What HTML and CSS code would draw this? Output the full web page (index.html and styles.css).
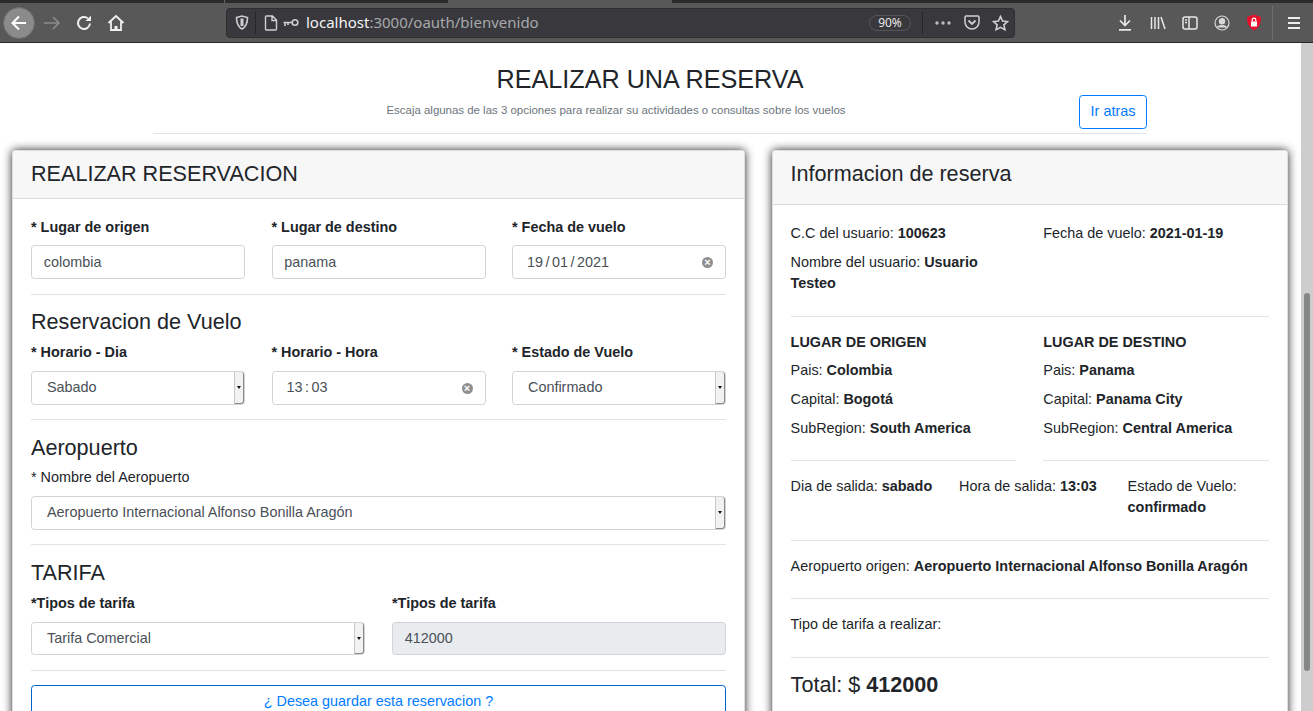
FILE: index.html
```html
<!DOCTYPE html>
<html>
<head>
    <title>Realizar una reserva</title>
    <link rel="stylesheet" href="styles.css">
</head>
<body>

<!-- Browser toolbar -->
<div class="tabstrip">
    <div class="tab-piece dark"></div>
    <div class="tab-piece mid"></div>
    <div class="tab-piece light"></div>
    <div class="tab-piece dark wide"></div>
</div>
<div class="toolbar">
    <div class="back-btn">
        <svg width="20" height="20" viewBox="0 0 20 20" fill="none" stroke="#fff" stroke-width="2"><path d="M17 10H4M10 3.5 3.500 10l6.500 6.500"/></svg>
    </div>
    <svg class="forward" width="18" height="18" viewBox="0 0 18 18" fill="none" stroke="#8c8c8c" stroke-width="1.600"><path d="M1 9h15M10 3l6 6-6 6"/></svg>
    <svg class="reload" width="18" height="18" viewBox="0 0 18 18" fill="none" stroke="#f0f0f0" stroke-width="2"><path d="M15 9.500A6 6 0 1 1 12.800 4.300"/><path d="M16 1.500V7h-5.500z" fill="#f0f0f0" stroke="none"/></svg>
    <svg class="home" width="18" height="18" viewBox="0 0 18 18" fill="none" stroke="#f0f0f0" stroke-width="1.800"><path d="M1.500 9 9 2l7.500 7M4 7.500V16h10V7.500"/><path d="M7.500 16v-4h3v4" fill="#f0f0f0" stroke="none"/></svg>

    <div class="urlbar">
        <svg class="shield" width="14" height="15" viewBox="0 0 14 15" fill="none" stroke="#cfcfcf" stroke-width="1.600"><path d="M1.500 2.500 7 1l5.500 1.500c0 5-1 9-5.500 11.500C2.500 11.500 1.500 7.500 1.500 2.500z"/><path d="M7 3.500v7.500" stroke-width="3"/></svg>
        <span class="url-sep"></span>
        <svg class="doc" width="14" height="16" viewBox="0 0 14 16" fill="none" stroke="#d0d0d0" stroke-width="1.400"><path d="M2 1h6.500L12.500 5v9a1 1 0 0 1-1 1h-9a1 1 0 0 1-1-1V2a1 1 0 0 1 .5-1zM8 1v4.500h4.500"/></svg>
        <svg class="key" width="16" height="9" viewBox="0 0 16 9" fill="none" stroke="#d0d0d0" stroke-width="1.600"><circle cx="12" cy="4.500" r="2.800"/><path d="M9 4.500H.5M2 4.500V8M5 4.500V7"/></svg>
        <span class="url-text">localhost<span class="url-dim">:3000/oauth/bienvenido</span></span>
        <span class="zoom-pill">90%</span>
        <span class="url-sep second"></span>
        <svg class="dots" width="16" height="4" viewBox="0 0 16 4" fill="#bdbdbd"><circle cx="2" cy="2" r="1.700"/><circle cx="8" cy="2" r="1.700"/><circle cx="14" cy="2" r="1.700"/></svg>
        <svg class="pocket" width="16" height="15" viewBox="0 0 16 15" fill="none" stroke="#d0d0d0" stroke-width="1.500"><path d="M1 2a1 1 0 0 1 1-1h12a1 1 0 0 1 1 1v5a7 7 0 0 1-14 0z"/><path d="M4.500 5.500 8 9l3.500-3.500" stroke-width="1.800"/></svg>
        <svg class="star" width="17" height="16" viewBox="0 0 17 16" fill="none" stroke="#d0d0d0" stroke-width="1.600"><path d="m8.500 1.500 2.100 4.500 4.900.6-3.600 3.300 1 4.800-4.400-2.400-4.400 2.400 1-4.800L1.500 6.600l4.900-.6z"/></svg>
    </div>

    <div class="toolbar-icons">
        <svg class="download" width="14" height="16" viewBox="0 0 14 16" fill="none" stroke="#e8e8e8" stroke-width="1.700"><path d="M7 0v10M2 5.500l5 5 5-5M1 14.800h12"/></svg>
        <svg width="16" height="14" viewBox="0 0 16 14" fill="none" stroke="#e8e8e8" stroke-width="1.500"><path d="M1.500 1v12M5 1v12M8.500 1v12M11 1l4 12"/></svg>
        <svg width="16" height="14" viewBox="0 0 16 14" fill="none" stroke="#e8e8e8" stroke-width="1.500"><rect x="1" y="1" width="14" height="12" rx="2"/><path d="M7 1v12M3 4h2M3 6.500h2"/></svg>
        <svg width="16" height="16" viewBox="0 0 16 16" fill="none" stroke="#d8d8d8" stroke-width="1.200"><circle cx="8" cy="8" r="7"/><circle cx="8" cy="6.300" r="2.600" fill="#d8d8d8"/><path d="M3.500 12.500c1-2.500 8-2.500 9 0" fill="#d8d8d8"/></svg>
        <svg width="16" height="17" viewBox="0 0 16 17"><path d="M8 .5 15 3c0 6-1.500 10.500-7 13.500C2.500 13.500 1 9 1 3z" fill="#e8112d"/><rect x="5" y="7.500" width="6" height="5" fill="#fff"/><path d="M6.200 7.500V6a1.800 1.800 0 0 1 3.600 0v1.500" fill="none" stroke="#fff" stroke-width="1.200"/></svg>
    </div>
    <span class="toolbar-sep"></span>
    <svg class="hamburger" width="14" height="12" viewBox="0 0 14 12" fill="none" stroke="#eee" stroke-width="1.800"><path d="M1 1h12M1 6h12M1 11h12"/></svg>
</div>

<!-- Page viewport -->
<div class="viewport">
    <div class="page">
        <div class="page-header">
            <div class="page-title">
                <h1>REALIZAR UNA RESERVA</h1>
                <p>Escaja algunas de las 3 opciones para realizar su actividades o consultas sobre los vuelos</p>
            </div>
            <a class="btn-back">Ir atras</a>
        </div>

        <div class="cards">
            <div class="card card-form">
                <div class="card-header"><h2>REALIZAR RESERVACION</h2></div>
                <div class="card-body">
                    <div class="row three first-row">
                        <div class="field">
                            <label>* Lugar de origen</label>
                            <div class="control">colombia</div>
                        </div>
                        <div class="field">
                            <label>* Lugar de destino</label>
                            <div class="control">panama</div>
                        </div>
                        <div class="field">
                            <label>* Fecha de vuelo</label>
                            <div class="control date">19 / 01 / 2021<span class="clear">&#215;</span></div>
                        </div>
                    </div>
                    <hr class="after-first">
                    <h3>Reservacion de Vuelo</h3>
                    <div class="row three">
                        <div class="field">
                            <label>* Horario - Dia</label>
                            <div class="control select">Sabado<span class="select-btn"></span></div>
                        </div>
                        <div class="field">
                            <label>* Horario - Hora</label>
                            <div class="control date">13 : 03<span class="clear">&#215;</span></div>
                        </div>
                        <div class="field">
                            <label>* Estado de Vuelo</label>
                            <div class="control select">Confirmado<span class="select-btn"></span></div>
                        </div>
                    </div>
                    <hr>
                    <h3 class="airport-title">Aeropuerto</h3>
                    <div class="field">
                        <label class="plain">* Nombre del Aeropuerto</label>
                        <div class="control select">Aeropuerto Internacional Alfonso Bonilla Aragón<span class="select-btn"></span></div>
                    </div>
                    <hr>
                    <h3>TARIFA</h3>
                    <div class="row two">
                        <div class="field">
                            <label>*Tipos de tarifa</label>
                            <div class="control select">Tarifa Comercial<span class="select-btn"></span></div>
                        </div>
                        <div class="field">
                            <label>*Tipos de tarifa</label>
                            <div class="control disabled">412000</div>
                        </div>
                    </div>
                    <hr>
                    <a class="btn-save">¿ Desea guardar esta reservacion ?</a>
                </div>
            </div>

            <div class="card card-info">
                <div class="card-header"><h2>Informacion de reserva</h2></div>
                <div class="card-body">
                    <div class="row info-two">
                        <div>
                            <p>C.C del usuario: <b>100623</b></p>
                            <p>Nombre del usuario: <b>Usuario Testeo</b></p>
                        </div>
                        <div>
                            <p>Fecha de vuelo: <b>2021-01-19</b></p>
                        </div>
                    </div>
                    <hr class="after-user">
                    <div class="row info-two">
                        <div class="place">
                            <p><b>LUGAR DE ORIGEN</b></p>
                            <p>Pais: <b>Colombia</b></p>
                            <p>Capital: <b>Bogotá</b></p>
                            <p>SubRegion: <b>South America</b></p>
                            <hr>
                        </div>
                        <div class="place">
                            <p><b>LUGAR DE DESTINO</b></p>
                            <p>Pais: <b>Panama</b></p>
                            <p>Capital: <b>Panama City</b></p>
                            <p>SubRegion: <b>Central America</b></p>
                            <hr>
                        </div>
                    </div>
                    <div class="row info-three">
                        <p>Dia de salida: <b>sabado</b></p>
                        <p>Hora de salida: <b>13:03</b></p>
                        <p>Estado de Vuelo: <b>confirmado</b></p>
                    </div>
                    <hr class="after-flight">
                    <p>Aeropuerto origen: <b>Aeropuerto Internacional Alfonso Bonilla Aragón</b></p>
                    <hr class="after-airport">
                    <p>Tipo de tarifa a realizar:</p>
                    <hr class="after-fare">
                    <p class="total">Total: $ <b>412000</b></p>
                </div>
            </div>
        </div>
    </div>
    <div class="scrollbar"><div class="scroll-thumb"></div></div>
</div>

</body>
</html>
```

FILE: styles.css
```css
* {
    box-sizing: border-box;
}
html, body {
    height: 100%;
}
body {
    margin: 0;
    overflow: hidden;
    font-family: "Liberation Sans", Arial, sans-serif;
    font-size: 14.4px;
    line-height: 21.6px;
    color: #212529;
    background-color: #fff;
}

/* Browser toolbar */
.tabstrip {
    display: flex;
    height: 3px;
    background-color: #2b2b2b;
}
.tab-piece {
    width: 224px;
}
.tab-piece.dark {
    background-color: #2b2b2b;
}
.tab-piece.mid {
    background-color: #2b2b2b;
    border-left: 1px solid #666;
}
.tab-piece.light {
    background-color: #585858;
}
.tab-piece.wide {
    flex: 1;
}
.toolbar {
    display: flex;
    align-items: center;
    height: 40px;
    background-color: #585858;
    border-bottom: 1px solid #2a2a2a;
}
.back-btn {
    display: flex;
    align-items: center;
    justify-content: center;
    width: 32px;
    height: 32px;
    margin-left: 3px;
    border-radius: 50%;
    background-color: #8b8b8b;
    border: 1px solid #6c6c6c;
}
.forward {
    margin-left: 8px;
}
.reload {
    margin-left: 14px;
}
.home {
    margin-left: 14px;
}
.urlbar {
    display: flex;
    align-items: center;
    width: 789px;
    height: 30px;
    margin-left: 101px;
    background-color: #38383d;
    border-radius: 4px;
    border: 1px solid #2e2e2e;
    color: #fff;
}
.shield {
    margin-left: 8px;
}
.url-sep {
    width: 1px;
    height: 22px;
    margin-left: 6px;
    background-color: #26262a;
}
.doc {
    margin-left: 8px;
}
.key {
    margin-left: 5px;
}
.url-text {
    margin-left: 7px;
    font-family: "Noto Sans", sans-serif;
    font-size: 15px;
    color: #f4f4f4;
    width: 563px;
    white-space: nowrap;
}
.url-dim {
    color: #a9a9ab;
}
.zoom-pill {
    width: 42px;
    height: 16px;
    border: 1px solid #55555b;
    border-radius: 8px;
    font-family: "Noto Sans", sans-serif;
    font-size: 12px;
    line-height: 14px;
    text-align: center;
    color: #e8e8e8;
}
.url-sep.second {
    margin-left: 11px;
}
.dots {
    margin-left: 12px;
}
.pocket {
    margin-left: 13px;
}
.star {
    margin-left: 12px;
}
.toolbar-icons {
    display: flex;
    align-items: center;
    gap: 16px;
    margin-left: 103px;
}
.download {
    margin-right: 2px;
}
.toolbar-sep {
    width: 1px;
    height: 34px;
    margin-left: 10px;
    background-color: #6e6e6e;
}
.hamburger {
    margin-left: 14px;
}

/* Page */
.viewport {
    display: flex;
    height: 668px;
}
.page {
    flex: 1;
    min-width: 0;
    overflow: hidden;
}
.scrollbar {
    width: 12px;
    padding: 250px 3px 0;
    background-color: #cdcdcd;
}
.scroll-thumb {
    height: 378px;
    border-radius: 3px;
    background-color: #858787;
}
.page-header {
    display: flex;
    width: 994px;
    height: 91px;
    margin-left: 153px;
    padding-top: 18px;
    border-bottom: 1px solid #e3e3e3;
}
.page-title {
    flex: 1;
    text-align: center;
}
.page-title h1 {
    margin: 0 0 5px;
    padding-left: 68px;
    font-size: 25.2px;
    font-weight: 400;
    line-height: 36px;
    color: #212529;
}
.page-title p {
    margin: 0;
    font-size: 11.45px;
    line-height: 16px;
    color: #6c757d;
}
.btn-back {
    align-self: flex-end;
    width: 68px;
    height: 34px;
    margin-bottom: 4px;
    padding-top: 5px;
    border: 1px solid #007bff;
    border-radius: 3.6px;
    color: #007bff;
    text-align: center;
    white-space: nowrap;
}
.cards {
    display: flex;
    align-items: flex-start;
    gap: 26.6px;
    margin: 15.6px 13px 0 12px;
}
.card {
    border-radius: 3.6px;
    background-color: #fff;
    border: 1px solid rgba(0, 0, 0, 0.125);
    box-shadow: 0 0 10px rgba(0, 0, 0, 0.85);
}
.card-form {
    width: 733px;
    flex: none;
}
.card-info {
    flex: 1;
    min-width: 0;
}
.card-header {
    background-color: #f7f7f7;
    border-bottom: 1px solid #dcdcdc;
    padding: 10.4px 18px 10.8px;
}
.card-header h2 {
    margin: 0;
    font-size: 21.6px;
    font-weight: 400;
    line-height: 25.92px;
}
.card-info .card-header h2 {
    margin-bottom: 6.6px;
}
.card-body {
    padding: 17.8px 18px 30px;
}
.row {
    display: grid;
}
.row.three {
    grid-template-columns: repeat(3, 1fr);
    column-gap: 26.500px;
}
.row.two {
    grid-template-columns: repeat(2, 1fr);
    column-gap: 27px;
}
label {
    display: block;
    margin-bottom: 7.2px;
    font-weight: bold;
}
label.plain {
    font-weight: 400;
    margin-bottom: 7.6px;
}
.control {
    position: relative;
    height: 33.6px;
    padding: 5px 11.8px;
    border: 1px solid #ced4da;
    border-radius: 3.6px;
    color: #495057;
    background-color: #fff;
}
.first-row .control {
    padding-top: 5.3px;
}
.control.date {
    padding-left: 14px;
    word-spacing: -1.5px;
}
.control.select {
    padding-left: 15px;
}
.control.disabled {
    background-color: #e9ecef;
}
.clear {
    position: absolute;
    right: 12px;
    top: 11px;
    width: 11px;
    height: 11px;
    border-radius: 50%;
    background-color: #8f8f8f;
    color: #fff;
    font-size: 11px;
    line-height: 11px;
    text-align: center;
    font-weight: bold;
}
.select-btn {
    position: absolute;
    right: 0;
    top: 0;
    bottom: 0;
    width: 10px;
    background-color: #f2f2f2;
    border-left: 1px solid #c8c8c8;
    border-right: 1px solid #8a8a8a;
    border-bottom: 1px solid #8a8a8a;
    border-radius: 0 3px 3px 0;
}
.select-btn::after {
    content: "";
    position: absolute;
    left: 2px;
    top: 14px;
    border-left: 2.500px solid transparent;
    border-right: 2.500px solid transparent;
    border-top: 3px solid #111;
}
hr {
    margin: 14.4px 0 0;
    border: 0;
    border-top: 1px solid #e3e3e3;
}
hr.after-first {
    margin-top: 15px;
}
h3 {
    margin: 14.4px 0 7.2px;
    font-size: 21.6px;
    font-weight: 400;
    line-height: 25.92px;
}
h3.airport-title {
    margin-bottom: 6.8px;
}
.btn-save {
    display: block;
    margin-top: 14.4px;
    height: 34px;
    padding-top: 5px;
    border: 1px solid #0062cc;
    border-radius: 3.6px;
    color: #007bff;
    text-align: center;
}

/* Right card */
.card-info p {
    margin: 0 0 7.2px;
}
.row.info-two {
    grid-template-columns: 1fr 1fr;
    column-gap: 27px;
}
.row.info-three {
    grid-template-columns: 142px 142px 1fr;
    column-gap: 26.5px;
    margin-top: 14.5px;
}
hr.after-user {
    margin: 14px 0 14.4px;
}
.place hr {
    margin: 20.7px 0 0;
}
hr.after-flight {
    margin: 14.1px 0 14.8px;
}
hr.after-airport {
    margin: 20.3px 0 15.1px;
}
hr.after-fare {
    margin: 21.2px 0 14.6px;
}
.card-info p.total {
    font-size: 21.6px;
    line-height: 25.92px;
}
```
